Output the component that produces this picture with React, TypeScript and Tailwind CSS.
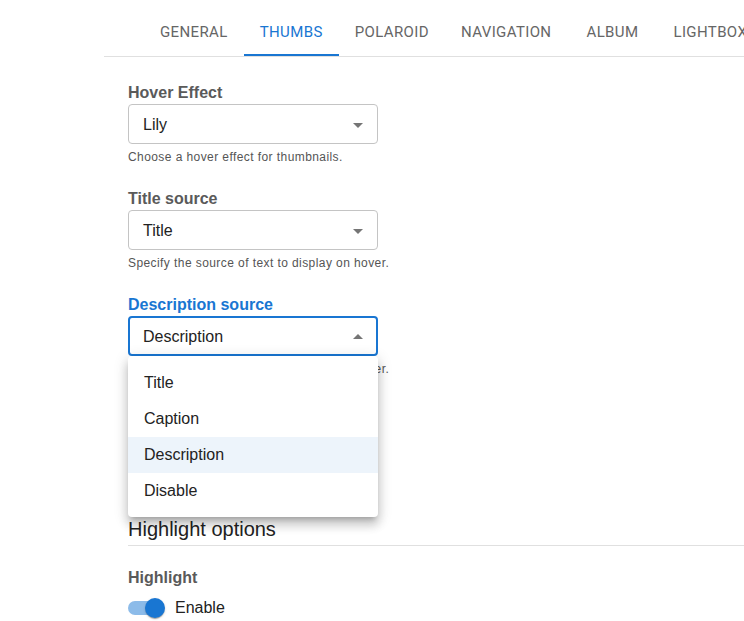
import React from 'react';

const tabs = ['General', 'Thumbs', 'Polaroid', 'Navigation', 'Album', 'Lightbox'];

const ArrowIcon: React.FC<{ up?: boolean }> = ({ up }) => (
  <svg width="24" height="24" viewBox="0 0 24 24" className="fill-[#757575]">
    <path d={up ? 'M7 14l5-5 5 5z' : 'M7 10l5 5 5-5z'} />
  </svg>
);

interface FieldProps {
  label: string;
  value: string;
  helper: string;
  open?: boolean;
  options?: string[];
}

const SelectField: React.FC<FieldProps> = ({ label, value, helper, open, options }) => (
  <div className="flex flex-col">
    <div className={`h-[20px] text-[16px] leading-[22px] font-bold ${open ? 'text-[#1976d2]' : 'text-[#5a5a5a]'}`}>
      {label}
    </div>
    <div className="relative mt-[2px] w-[250px]">
      <div
        className={`flex h-[40px] items-center justify-between rounded-[4px] bg-white pl-[13px] pr-[6px] pt-[1px] text-[16px] text-[#222] ${
          open ? 'border-2 border-[#1976d2]' : 'border border-[#c4c4c4] pl-[14px] pr-[7px]'
        }`}
      >
        <span>{value}</span>
        <ArrowIcon up={open} />
      </div>
      {open && options && (
        <div className="absolute left-0 top-full z-10 w-[250px] rounded-[4px] bg-white pb-2 pt-[9px] shadow-[0px_5px_5px_-3px_rgba(0,0,0,0.2),0px_8px_10px_1px_rgba(0,0,0,0.14),0px_3px_14px_2px_rgba(0,0,0,0.12)]">
          {options.map((o) => (
            <div
              key={o}
              className={`flex h-[36px] items-center px-4 text-[16px] text-[#222] ${o === value ? 'bg-[#edf4fb]' : ''}`}
            >
              {o}
            </div>
          ))}
        </div>
      )}
    </div>
    <div className="mt-[5px] h-[16px] text-[12px] leading-[16px] tracking-[0.035em] text-[#555]">{helper}</div>
  </div>
);

const App: React.FC = () => {
  return (
    <div className="flex min-h-[621px] bg-white font-['Liberation_Sans',Arial,sans-serif]">
      <div className="w-[104px] shrink-0" />
      <div className="flex-1 overflow-hidden">
        <div className="flex border-b border-[#e0e0e0] pl-[40px] pt-2 font-['Roboto',sans-serif]">
          {tabs.map((t) => {
            const active = t === 'Thumbs';
            return (
              <div
                key={t}
                className={`relative flex h-[48px] min-w-[90px] shrink-0 items-center justify-center whitespace-nowrap px-4 text-[15px] uppercase tracking-[0.025em] ${
                  active ? 'text-[#1976d2]' : 'text-[#666]'
                }`}
              >
                {t}
                {active && <div className="absolute bottom-0 left-0 right-0 h-[2px] bg-[#1976d2]" />}
              </div>
            );
          })}
        </div>

        <div className="flex flex-col pl-6 pt-[25px]">
          <div className="flex flex-col gap-[23px]">
            <SelectField label="Hover Effect" value="Lily" helper="Choose a hover effect for thumbnails." />
            <SelectField label="Title source" value="Title" helper="Specify the source of text to display on hover." />
            <SelectField
              label="Description source"
              value="Description"
              helper="Specify the source of text to display on hover."
              open
              options={['Title', 'Caption', 'Description', 'Disable']}
            />
          </div>

          <div className="mt-[140px] border-b border-[#e0e0e0] pb-[4px] text-[20px] leading-[24px] text-[#222]">
            Highlight options
          </div>

          <div className="mt-[22px] h-[20px] text-[16px] font-bold leading-[20px] text-[#5a5a5a]">Highlight</div>
          <div className="mt-[8px] flex h-[24px] items-center">
            <div className="relative h-[14px] w-[34px] rounded-full bg-[#8cbbe9]">
              <div className="absolute right-[-3px] top-[-3px] h-[20px] w-[20px] rounded-full bg-[#1976d2] shadow-[0px_2px_1px_-1px_rgba(0,0,0,0.2),0px_1px_1px_0px_rgba(0,0,0,0.14),0px_1px_3px_0px_rgba(0,0,0,0.12)]" />
            </div>
            <span className="ml-[13px] text-[16px] text-[#222]">Enable</span>
          </div>
        </div>
      </div>
    </div>
  );
};

export default App;
